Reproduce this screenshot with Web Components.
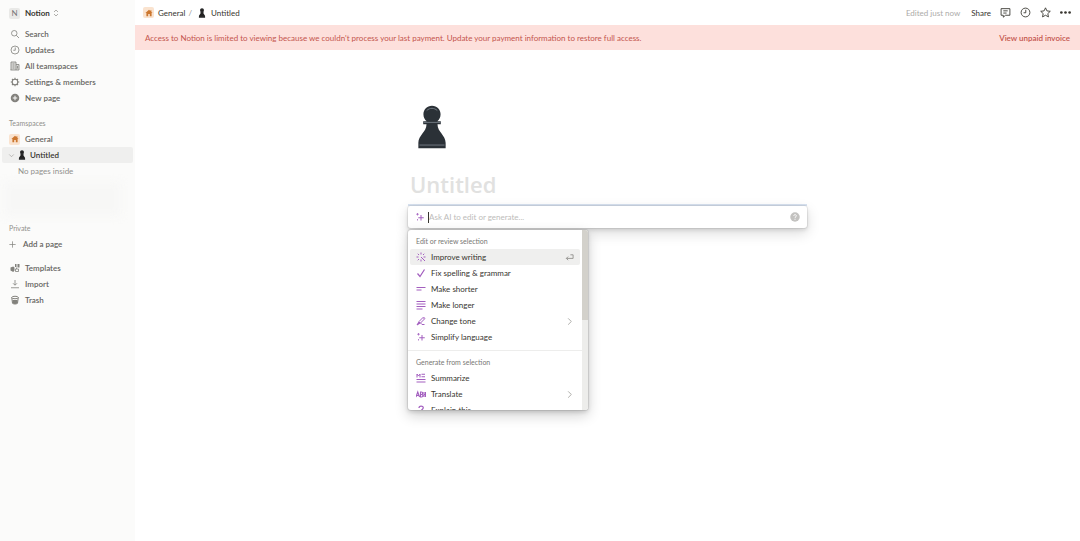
<!DOCTYPE html>
<html lang="en">
<head>
<meta charset="utf-8">
<title>Untitled</title>
<style>
    html, body { height: 100%; }
    body {
        margin: 0;
        font-family: Lato, "Open Sans", sans-serif;
        font-size: 8px;
        line-height: 16px;
        color: #37352f;
        background: #fff;
    }
</style>
</head>
<body>
<notion-app></notion-app>

<script>
const ICONS = {
    search: '<circle cx="8.5" cy="8.5" r="5.5"/><path d="M12.5 12.5 18 18"/>',
    clock: '<circle cx="10" cy="10" r="8"/><path d="M10.5 5v5.5H6.5"/>',
    building: '<path fill="currentColor" fill-opacity=".25" d="M2 18V2h10v16M12 7h6v11H1"/><path d="M5 6h4M5 10h4M5 14h4M15 10v5"/>',
    gear: '<circle cx="10" cy="10" r="5.6" stroke-width="2.2"/><path stroke-width="2.2" d="M10 1.500v3M10 15.500v3M1.500 10h3M15.500 10h3M4 4l2 2M14 14l2 2M4 16l2-2M14 6l2-2"/>',
    addCircle: '<circle cx="10" cy="10" r="8.500" fill="currentColor" stroke="none"/><path stroke="#fbfbfa" stroke-width="2" d="M10 5.500v9M5.500 10h9"/>',
    plus: '<path d="M10 3v14M3 10h14"/>',
    templates: '<path fill="currentColor" stroke="none" d="M6.500 7 1 9v6l5.500 3L9 15V9zM10 2h3v6h-3zM15 2h4v7h-4z"/><path d="M11 12h6v5h-6zM13 9v3"/>',
    import: '<path d="M10 2v10M6 8.500l4 4 4-4M2 17.500h16"/>',
    trash: '<path stroke-width="2" d="M3.500 5 5 16.500c2.500 2 7.500 2 10 0L16.500 5"/><ellipse cx="10" cy="5" rx="6.500" ry="2.500" stroke-width="2"/><path fill="currentColor" stroke="none" d="M5 10h10v6.500c-2.500 2-7.500 2-10 0z"/>',
    updown: '<path d="M5 7.500 10 2.500l5 5M5 12.500l5 5 5-5"/>',
    down: '<path d="M3.500 7 10 13.500 16.500 7"/>',
    right: '<path d="M7 3l7 7-7 7"/>',
    home: '<path fill="currentColor" stroke="none" d="M10 2 1 10h2.500v8H8v-5.500h4V18h4.500v-8H19l-3-2.700V3h-2.500v2z"/>',
    comment: '<path d="M2 3h16v12h-8l-4 3.500V15H2zM6 7h8M6 11h6"/>',
    star: '<path d="m10 1.500 2.600 5.600 6.100.7-4.500 4.200 1.200 6-5.400-3-5.400 3 1.200-6L1.300 7.800l6.100-.7z"/>',
    dots: '<g fill="currentColor" stroke="none"><circle cx="2.500" cy="10" r="2.400"/><circle cx="10" cy="10" r="2.400"/><circle cx="17.500" cy="10" r="2.400"/></g>',
    sparkle: '<path stroke-width="2" d="M12 6v11M6.500 11.500h11"/><path d="M5 2v5M2.500 4.500h5M5 14v3"/>',
    burst: '<path stroke-width="2" d="M10 1v4M10 15v4M1 10h4M15 10h4M3.500 3.500 6 6M16.500 3.500 14 6M3.500 16.500 6 14M10 10l8 8"/>',
    check: '<path stroke-width="2.500" d="m3 11 5 6L17 3"/>',
    shorter: '<path stroke-width="2" d="M1 7h18M1 12h10"/>',
    longer: '<path stroke-width="2" d="M1 3h18M1 8h18M1 13h18M1 18h12"/>',
    tone: '<path stroke-width="2" d="m2 18 4-7 8-8 3 3-8 8zM2 18l6-6M9 14l3 3h5M15 2l3 3"/>',
    summary: '<path stroke-width="2" d="M2 9V2l3 4 3-4v7M11 2.500h7M11 7.500h7M1 13h18M1 18h18"/>',
    translate: '<path stroke-width="2.200" d="m0 16 3.500-10L7 16M1.500 13h4M9 6v10h2.500c3 0 3-5 0-5H9h2c3 0 3-5 0-5zM16 6v10M19 6v10M16 11h3"/>',
    question: '<path stroke-width="2.500" d="M6 6c0-5 8.500-5 8.500-.3 0 3.300-4.300 3-4.300 7M10.200 16v2.500"/>',
    enter: '<path stroke-width="2" d="M12 4h6v8H3M7 8l-4 4 4 4"/>',
    help: '<circle cx="10" cy="10" r="9.500" fill="currentColor" stroke="none"/><path stroke="#fff" stroke-width="2" d="M7.500 8c0-3.500 5.200-3.500 5.200-.3 0 2-2.600 2-2.600 4M10 13.500v2"/>',
    pawn: '<path fill="currentColor" stroke="none" d="M10 .3c-2.300 0-3.900 1.700-3.900 3.900 0 1.400.6 2.500 1.500 3.200H6v1.300h1.500c0 3.600-3.700 4.900-3.700 8.500v2.500h12.400v-2.500c0-3.600-3.700-4.900-3.700-8.500H14V7.400h-1.600c.9-.7 1.500-1.800 1.500-3.200C13.900 2 12.300.3 10 .3z"/><path stroke="#77818a" stroke-width=".4" d="M7.600 2.500c1.400-1.300 3.400-1.300 4.800 0M6.200 7.900h7.600M4.300 18.200h11.400"/>'
};

class BaseElement extends HTMLElement {
    constructor(){
        super();
        this.attachShadow({mode: 'open'});
    }

    connectedCallback(){
        this.shadowRoot.innerHTML = `<style>
            * { box-sizing: border-box; }
            button {
                font: inherit; color: inherit; text-align: left;
                margin: 0; padding: 0; border: 0; background: none;
                display: flex; align-items: center; cursor: pointer;
            }
            a { color: inherit; text-decoration: none; }
            ${this._getStyle()}
        </style>${this._getTemplate()}`;
    }

    _getStyle(){ return '' }
    _getTemplate(){ return '' }
}

class UiIcon extends BaseElement {
    _getStyle(){
        return `
            :host { display: block; flex: none; width: var(--icon-size, 10px); height: var(--icon-size, 10px); }
            svg { display: block; width: 100%; height: 100%; fill: none; stroke: currentColor; stroke-width: 1.6; }
        `
    }
    _getTemplate(){
        return `<svg viewBox="0 0 20 20" aria-hidden="true">${ICONS[this.getAttribute('name')] || ''}</svg>`
    }
}

// square tile behind the teamspace icon
class TeamTile extends BaseElement {
    _getStyle(){
        return `
            :host {
                display: flex; flex: none; align-items: center; justify-content: center;
                width: 11px; height: 11px; border-radius: 2px;
                background: #fae3cf; color: #cc772f; --icon-size: 8px;
            }
        `
    }
    _getTemplate(){ return '<ui-icon name="home"></ui-icon>' }
}

class NavItem extends BaseElement {
    _getStyle(){
        return `
            :host { display: block; padding: 0 2px; color: #65645f; font-weight: 600; }
            button { width: 100%; height: 16px; padding: 0 7px; gap: 5px; border-radius: 2px; }
            .icon { display: flex; justify-content: center; width: 11px; color: #82817c; }
            :host([active]) { color: #37352f; }
            :host([active]) button { background: #efefee; gap: 0; padding-left: 4px; }
            :host([compact]) button { padding-left: 5px; }
            :host([compact]) { --icon-size: 9px; }
        `
    }
    _getTemplate(){
        return `<button type="button"><span class="icon"><slot name="icon">
            <ui-icon name="${this.getAttribute('icon')}"></ui-icon></slot></span><slot></slot></button>`
    }
}

class SideBar extends BaseElement {
    _getStyle(){
        return `
            :host { display: flex; flex-direction: column; flex: none; width: 135px; background: #fbfbfa; }
            nav, section { display: flex; flex-direction: column; }
            .switcher { height: 26px; padding: 0 9px; gap: 5px; font-weight: 700; --icon-size: 8px; }
            .letter {
                width: 11px; height: 11px; line-height: 11px; border-radius: 2px;
                background: #e9e9e7; color: #777; text-align: center; font-weight: 400;
            }
            .switcher ui-icon { margin-left: -3px; color: #82817c; }
            h2 { margin: 0; padding: 0 9px; font-size: 7px; font-weight: 400; color: #91908c; }
            .teams { margin-top: 9px; }
            .page { display: flex; align-items: center; gap: 3px; }
            .chevron { --icon-size: 7px; color: #91908c; }
            .pawn { --icon-size: 10px; color: #222; }
            .empty { margin: 0; padding-left: 18px; color: #91908c; }
            .haze { height: 34px; margin: 3px 14px 0 4px; background: #f7f7f6; filter: blur(5px); }
            .private { margin-top: 4px; }
            .tools { margin-top: 8px; }
        `
    }
    _getTemplate(){
        return `
            <button type="button" class="switcher"><span class="letter">N</span><span>Notion</span><ui-icon name="updown"></ui-icon></button>
            <nav aria-label="Workspace">
                <nav-item icon="search">Search</nav-item>
                <nav-item icon="clock">Updates</nav-item>
                <nav-item icon="building">All teamspaces</nav-item>
                <nav-item icon="gear">Settings &amp; members</nav-item>
                <nav-item icon="addCircle">New page</nav-item>
            </nav>
            <section class="teams">
                <h2>Teamspaces</h2>
                <nav-item><team-tile slot="icon"></team-tile>General</nav-item>
                <nav-item active>
                    <span class="page" slot="icon"><ui-icon class="chevron" name="down"></ui-icon></span>
                    <span class="page"><ui-icon class="pawn" name="pawn"></ui-icon>Untitled</span>
                </nav-item>
                <p class="empty">No pages inside</p>
                <div class="haze"></div>
            </section>
            <section class="private">
                <h2>Private</h2>
                <nav-item compact icon="plus">Add a page</nav-item>
            </section>
            <nav class="tools" aria-label="Tools">
                <nav-item icon="templates">Templates</nav-item>
                <nav-item icon="import">Import</nav-item>
                <nav-item icon="trash">Trash</nav-item>
            </nav>
        `
    }
}

class TopBar extends BaseElement {
    _getStyle(){
        return `
            :host { display: flex; align-items: center; justify-content: space-between; height: 25px; padding: 0 9px 0 8px; }
            .crumbs, .actions { display: flex; align-items: center; }
            .crumbs { gap: 3px; }
            .crumbs a { display: flex; align-items: center; gap: 4px; }
            .slash { color: #91908c; margin-right: 2px; }
            .pawn { --icon-size: 10px; color: #222; }
            .actions { gap: 9px; --icon-size: 11px; }
            .edited { color: #acaba9; margin-right: 2px; }
        `
    }
    _getTemplate(){
        return `
            <nav class="crumbs" aria-label="Breadcrumb">
                <a href="#general"><team-tile></team-tile>General</a><span class="slash">/</span>
                <a href="#untitled"><ui-icon class="pawn" name="pawn"></ui-icon>Untitled</a>
            </nav>
            <div class="actions">
                <span class="edited">Edited just now</span>
                <button type="button">Share</button>
                <button type="button" aria-label="Comments"><ui-icon name="comment"></ui-icon></button>
                <button type="button" aria-label="History"><ui-icon name="clock"></ui-icon></button>
                <button type="button" aria-label="Favorite"><ui-icon name="star"></ui-icon></button>
                <button type="button" aria-label="More"><ui-icon name="dots"></ui-icon></button>
            </div>
        `
    }
}

class PaymentBanner extends BaseElement {
    _getStyle(){
        return `
            :host {
                display: flex; align-items: center; justify-content: space-between;
                height: 25px; padding: 0 10px; background: #fde0dc; color: #c4554d;
            }
            a { font-weight: 600; }
        `
    }
    _getTemplate(){ return '<span><slot></slot></span><a href="#billing">View unpaid invoice</a>' }
}

class AiPrompt extends BaseElement {
    _getStyle(){
        return `
            :host {
                display: flex; align-items: center; height: 22px; padding: 0 7px; gap: 3px;
                background: #fff; border-radius: 3px; color: #a35fbf;
                box-shadow: 0 0 0 1px rgba(15, 15, 15, .06), 0 2px 4px rgba(15, 15, 15, .12), 0 5px 14px rgba(15, 15, 15, .15);
            }
            .field { display: flex; flex: 1; align-items: center; }
            .caret { width: 1px; height: 11px; background: #37352f; }
            input {
                flex: 1; min-width: 0; height: 16px; padding: 0; border: 0; outline: 0;
                font: inherit; color: #37352f; background: none;
            }
            input::placeholder { color: #bdbcba; opacity: 1; }
            button { color: #c3c2c0; }
        `
    }
    _getTemplate(){
        return `
            <ui-icon name="sparkle"></ui-icon>
            <div class="field"><span class="caret"></span>
                <input type="text" aria-label="Ask AI" placeholder="Ask AI to edit or generate..."></div>
            <button type="button" aria-label="Help"><ui-icon name="help"></ui-icon></button>
        `
    }
}

class MenuOption extends BaseElement {
    _getStyle(){
        return `
            :host { display: block; padding: 0 2px; }
            button { width: 100%; height: 16px; padding: 0 6px; gap: 5px; border-radius: 2px; }
            .lead { color: #a35fbf; }
            .label { flex: 1; }
            .hint { color: #91908c; --icon-size: 9px; }
            :host([active]) button { background: #efefee; }
        `
    }
    _getTemplate(){
        const hint = this.getAttribute('hint');
        return `<button type="button" role="menuitem"><ui-icon class="lead" name="${this.getAttribute('icon')}"></ui-icon>
            <span class="label"><slot></slot></span>${hint ? `<ui-icon class="hint" name="${hint}"></ui-icon>` : ''}</button>`
    }
}

class AiMenu extends BaseElement {
    _getStyle(){
        return `
            :host {
                display: flex; width: 180px; height: 180px; overflow: hidden;
                background: #fff; border-radius: 3px;
                box-shadow: 0 0 0 1px rgba(15, 15, 15, .08), 0 2px 4px rgba(15, 15, 15, .15), 0 5px 14px rgba(15, 15, 15, .2);
            }
            .list { flex: 1; overflow: hidden; }
            h3 { margin: 0; padding: 0 8px; font-size: 7px; font-weight: 400; color: #787774; }
            .group { padding: 3px 0 5px; }
            .group + .group { border-top: 1px solid #ededec; }
            .scrollbar { width: 6px; background: #ededeb; }
            .thumb { height: 50%; background: #d3d1cb; }
        `
    }
    _getTemplate(){
        return `
            <div class="list" role="menu">
                <div class="group">
                    <h3>Edit or review selection</h3>
                    <menu-option active icon="burst" hint="enter">Improve writing</menu-option>
                    <menu-option icon="check">Fix spelling &amp; grammar</menu-option>
                    <menu-option icon="shorter">Make shorter</menu-option>
                    <menu-option icon="longer">Make longer</menu-option>
                    <menu-option icon="tone" hint="right">Change tone</menu-option>
                    <menu-option icon="sparkle">Simplify language</menu-option>
                </div>
                <div class="group">
                    <h3>Generate from selection</h3>
                    <menu-option icon="summary">Summarize</menu-option>
                    <menu-option icon="translate" hint="right">Translate</menu-option>
                    <menu-option icon="question">Explain this</menu-option>
                </div>
            </div>
            <div class="scrollbar"><div class="thumb"></div></div>
        `
    }
}

class PageView extends BaseElement {
    _getStyle(){
        return `
            :host { display: block; width: 100%; max-width: 399px; margin: 0 auto; padding-top: 55px; }
            .cover { --icon-size: 44px; color: #2b3137; padding-left: 2px; }
            h1 {
                margin: 20px 0 0; padding-left: 2px; color: #e1e1e0;
                font: 600 22px/30px "Open Sans", sans-serif;
            }
            .selected { height: 2px; margin-top: 5px; background: #d8e2f0; }
            ai-menu { margin-top: 2px; }
        `
    }
    _getTemplate(){
        return `
            <div class="cover"><ui-icon name="pawn"></ui-icon></div>
            <h1>Untitled</h1>
            <div class="selected"></div>
            <ai-prompt></ai-prompt>
            <ai-menu></ai-menu>
        `
    }
}

class NotionApp extends BaseElement {
    _getStyle(){
        return `
            :host { display: flex; min-height: 100%; }
            main { flex: 1; min-width: 0; }
        `
    }
    _getTemplate(){
        return `
            <side-bar></side-bar>
            <main>
                <top-bar></top-bar>
                <payment-banner>Access to Notion is limited to viewing because we couldn't process your last payment. Update your payment information to restore full access.</payment-banner>
                <page-view></page-view>
            </main>
        `
    }
}

window.customElements.define('ui-icon', UiIcon)
window.customElements.define('team-tile', TeamTile)
window.customElements.define('nav-item', NavItem)
window.customElements.define('side-bar', SideBar)
window.customElements.define('top-bar', TopBar)
window.customElements.define('payment-banner', PaymentBanner)
window.customElements.define('ai-prompt', AiPrompt)
window.customElements.define('menu-option', MenuOption)
window.customElements.define('ai-menu', AiMenu)
window.customElements.define('page-view', PageView)
window.customElements.define('notion-app', NotionApp)
</script>
</body>
</html>
